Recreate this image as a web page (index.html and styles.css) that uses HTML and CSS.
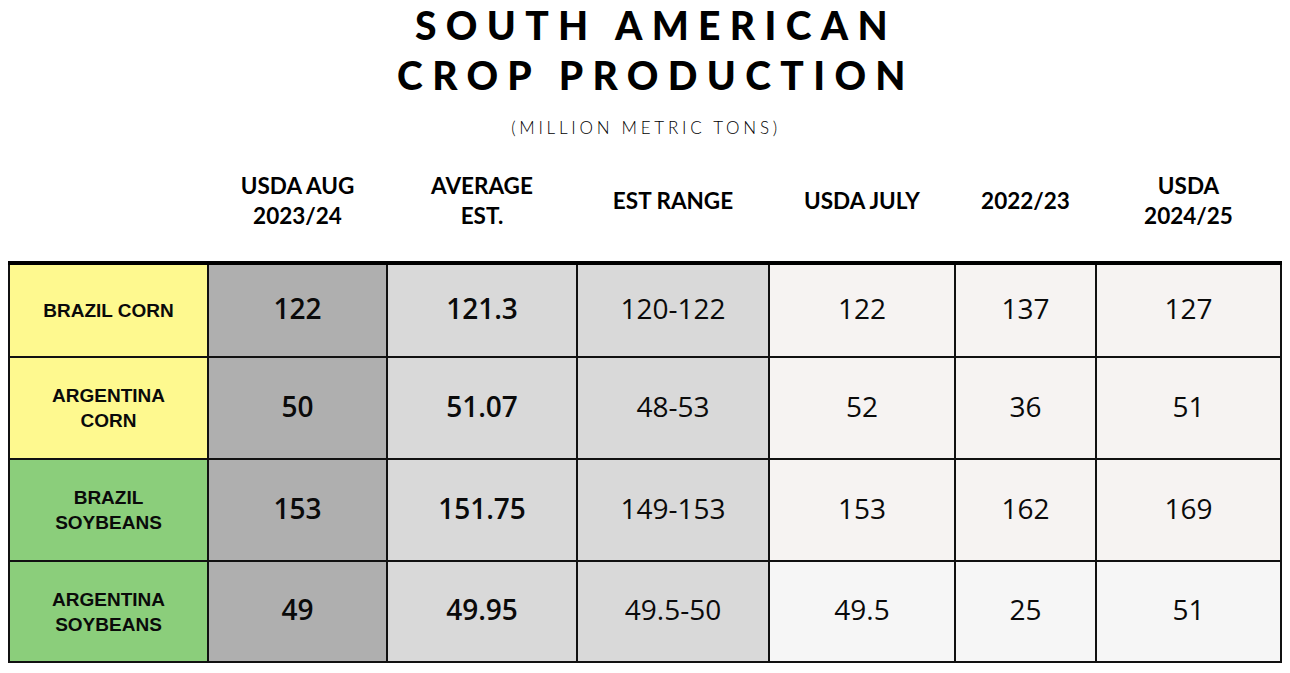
FILE: index.html
```html
<!DOCTYPE html>
<html>
<head>
<meta charset="utf-8">
<link rel="stylesheet" href="styles.css">
</head>
<body>
<div class="page">
  <h1 class="title">SOUTH AMERICAN<br>CROP PRODUCTION</h1>
  <div class="subtitle">(MILLION METRIC TONS)</div>
  <div class="head">
    <div></div>
    <div>USDA AUG<br>2023/24</div>
    <div>AVERAGE<br>EST.</div>
    <div>EST RANGE</div>
    <div>USDA JULY</div>
    <div>2022/23</div>
    <div>USDA<br>2024/25</div>
  </div>
  <div class="grid">
    <div class="c lab yellow r1">BRAZIL CORN</div>
    <div class="c num b dark r1">122</div>
    <div class="c num b light r1">121.3</div>
    <div class="c num light r1">120-122</div>
    <div class="c num pale r1">122</div>
    <div class="c num pale r1">137</div>
    <div class="c num pale r1">127</div>

    <div class="c lab yellow r2">ARGENTINA<br>CORN</div>
    <div class="c num b dark r2">50</div>
    <div class="c num b light r2">51.07</div>
    <div class="c num light r2">48-53</div>
    <div class="c num pale r2">52</div>
    <div class="c num pale r2">36</div>
    <div class="c num pale r2">51</div>

    <div class="c lab green r3">BRAZIL<br>SOYBEANS</div>
    <div class="c num b dark r3">153</div>
    <div class="c num b light r3">151.75</div>
    <div class="c num light r3">149-153</div>
    <div class="c num pale r3">153</div>
    <div class="c num pale r3">162</div>
    <div class="c num pale r3">169</div>

    <div class="c lab green r4">ARGENTINA<br>SOYBEANS</div>
    <div class="c num b dark r4">49</div>
    <div class="c num b light r4">49.95</div>
    <div class="c num light r4">49.5-50</div>
    <div class="c num pale2 r4">49.5</div>
    <div class="c num pale2 r4">25</div>
    <div class="c num pale2 r4">51</div>
  </div>
</div>
</body>
</html>
```

FILE: styles.css
```css
html, body {
  margin: 0;
  padding: 0;
  background: #ffffff;
}
.page {
  width: 1290px;
  height: 673px;
  overflow: hidden;
  color: #000;
}
.title {
  margin: 0;
  font-family: Lato, "Liberation Sans", sans-serif;
  font-weight: 900;
  font-size: 39px;
  line-height: 50px;
  letter-spacing: 0.24em;
  text-align: center;
  padding-left: 22px;
}
.subtitle {
  margin-top: 14px;
  font-family: Lato, "Liberation Sans", sans-serif;
  font-weight: 300;
  font-size: 17px;
  line-height: 28px;
  letter-spacing: 0.22em;
  text-align: center;
  padding-left: 2px;
}
.head {
  margin-top: 17px;
  margin-left: 8px;
  height: 84px;
  display: grid;
  grid-template-columns: 197px 177px 188px 190px 184px 139px 183px;
  column-gap: 2px;
  padding: 0 2px;
  width: 1270px;
  align-items: center;
  font-family: Lato, "Open Sans", sans-serif;
  font-weight: 700;
  font-size: 22.5px;
  line-height: 30px;
  text-align: center;
}
.grid {
  margin-top: 18px;
  margin-left: 8px;
  width: 1270px;
  display: grid;
  grid-template-columns: 197px 177px 188px 190px 184px 139px 183px;
  grid-template-rows: 91px 100px 100px 99px;
  gap: 2px;
  padding: 0 2px 2px 2px;
  border-top: 4px solid #000;
  background: #111;
}
.c {
  display: flex;
  align-items: center;
  justify-content: center;
  text-align: center;
}
.lab {
  font-family: "Liberation Sans", Arial, sans-serif;
  font-weight: 700;
  font-size: 19px;
  line-height: 25px;
  color: #0a0a0a;
}
.num {
  font-family: "Open Sans", "Liberation Sans", sans-serif;
  font-size: 28px;
  font-weight: 400;
  color: #0a0a0a;
  padding-bottom: 5px;
}
.b { font-weight: 600; }
.yellow { background: #fef98f; }
.green { background: #8bce7b; }
.dark { background: #afafaf; }
.light { background: #d9d9d9; }
.pale { background: #f6f3f2; }
.pale2 { background: #f6f6f6; }
```
